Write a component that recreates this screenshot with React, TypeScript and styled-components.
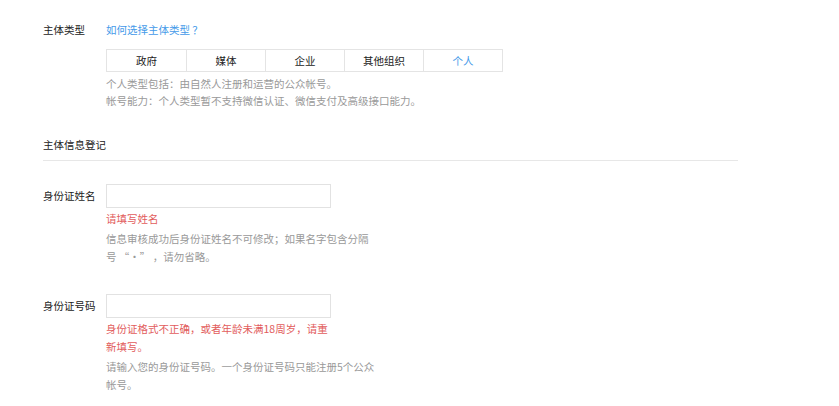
import React from "react";
import styled, { createGlobalStyle } from "styled-components";

const Global = createGlobalStyle`
  html, body { margin: 0; padding: 0; background: #fff; }
  body {
    font-family: "Noto Sans CJK SC", "Noto Sans", sans-serif;
    font-size: 10.5px;
    color: #222;
  }
`;

const Page = styled.div`
  width: 695px;
  padding: 21px 0 0 43px;
`;

const Row = styled.div<{ $mt?: number }>`
  display: flex;
  align-items: flex-start;
  margin-top: ${(p) => p.$mt ?? 0}px;
`;

const Label = styled.div<{ $lh?: number }>`
  width: 63px;
  flex: none;
  line-height: ${(p) => p.$lh ?? 18}px;
  color: #222;
`;

const Body = styled.div`
  display: flex;
  flex-direction: column;
`;

const Link = styled.a`
  line-height: 18px;
  color: #459ae9;
  text-decoration: none;
`;

const Segments = styled.div`
  display: grid;
  grid-template-columns: repeat(5, 79px);
  border: 1px solid #e4e4e4;
  margin-top: 10px;
`;

const Segment = styled.div<{ $active?: boolean }>`
  height: 21px;
  line-height: 21px;
  text-align: center;
  color: ${(p) => (p.$active ? "#459ae9" : "#222")};
  & + & { border-left: 1px solid #e4e4e4; }
`;

const Desc = styled.div<{ $mt?: number; $lh?: number; $w?: number }>`
  color: #999;
  line-height: ${(p) => p.$lh ?? 18}px;
  margin-top: ${(p) => p.$mt ?? 2}px;
  width: ${(p) => (p.$w ? `${p.$w}px` : "auto")};
`;

const Heading = styled.div`
  margin-top: 27px;
  line-height: 18px;
  padding-bottom: 6px;
  border-bottom: 1px solid #e7e7e7;
`;

const Input = styled.input`
  box-sizing: border-box;
  width: 225px;
  height: 24px;
  border: 1px solid #e2e2e2;
  margin: 0;
  padding: 0 6px;
  outline: none;
  font: inherit;
`;

const Error = styled.div`
  width: 225px;
  margin-top: 2px;
  line-height: 18px;
  color: #e25c5c;
`;

const types = ["政府", "媒体", "企业", "其他组织", "个人"];

export default function App() {
  return (
    <Page>
      <Global />
      <Row>
        <Label>主体类型</Label>
        <Body>
          <Link href="#">如何选择主体类型 ？</Link>
          <Segments>
            {types.map((t) => (
              <Segment key={t} $active={t === "个人"}>
                {t}
              </Segment>
            ))}
          </Segments>
          <Desc $mt={3} $lh={17}>
            个人类型包括：由自然人注册和运营的公众帐号。
            <br />
            帐号能力：个人类型暂不支持微信认证、微信支付及高级接口能力。
          </Desc>
        </Body>
      </Row>

      <Heading>主体信息登记</Heading>

      <Row $mt={23}>
        <Label $lh={24}>身份证姓名</Label>
        <Body>
          <Input />
          <Error>请填写姓名</Error>
          <Desc $w={270}>信息审核成功后身份证姓名不可修改；如果名字包含分隔号 “·” ，请勿省略。</Desc>
        </Body>
      </Row>

      <Row $mt={28}>
        <Label $lh={24}>身份证号码</Label>
        <Body>
          <Input />
          <Error>身份证格式不正确，或者年龄未满18周岁，请重新填写。</Error>
          <Desc $w={270}>请输入您的身份证号码。一个身份证号码只能注册5个公众帐号。</Desc>
        </Body>
      </Row>
    </Page>
  );
}
